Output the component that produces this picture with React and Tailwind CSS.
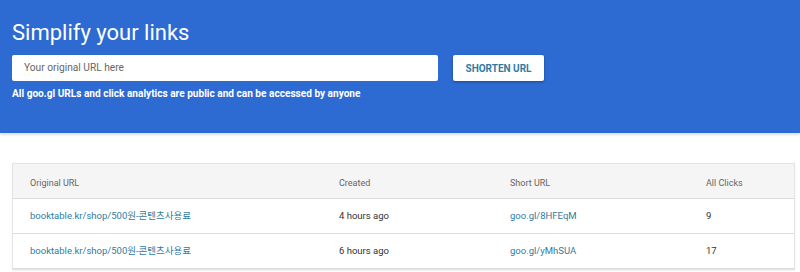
import React from 'react';

const rows = [
  { original: 'booktable.kr/shop/500원-콘텐츠사용료', created: '4 hours ago', short: 'goo.gl/8HFEqM', clicks: '9' },
  { original: 'booktable.kr/shop/500원-콘텐츠사용료', created: '6 hours ago', short: 'goo.gl/yMhSUA', clicks: '17' },
];

const font = { fontFamily: 'Roboto, "Noto Sans CJK KR", Arial, sans-serif' };

const App = () => {
  return (
    <div className="w-[800px] h-[272px] overflow-hidden bg-white" style={font}>
      {/* header */}
      <div className="h-[133px] bg-[#2d6bd3] px-3 pt-[18px] shadow-[0_2px_2px_rgba(0,0,0,0.12)]">
        <h1 className="text-[22px] leading-[30px] text-white">Simplify your links</h1>
        <div className="mt-[7px] flex items-center">
          <div className="w-[426px] h-[26px] bg-white rounded-[2px] flex items-center px-3 text-[10.2px] text-[#666]">
            Your original URL here
          </div>
          <button className="ml-[15px] w-[91px] h-[26px] bg-white rounded-[2px] text-[10px] font-bold text-[#2f7ba3] shadow-[0_1px_3px_rgba(0,0,0,0.35)]">
            SHORTEN URL
          </button>
        </div>
        <p className="mt-[5px] text-[10.1px] font-bold text-white">
          All goo.gl URLs and click analytics are public and can be accessed by anyone
        </p>
      </div>

      {/* table card */}
      <div className="ml-3 mr-[5px] mt-[30px] border border-[#e4e4e4] shadow-[0_1px_2px_rgba(0,0,0,0.06)]">
        <div className="h-[35px] bg-[#f5f5f5] border-b border-[#dcdcdc] grid grid-cols-[309px_171px_196px_1fr] items-center pl-[17px] pt-[6px] text-[9px] text-[#666]">
          <div>Original URL</div>
          <div>Created</div>
          <div>Short URL</div>
          <div>All Clicks</div>
        </div>
        {rows.map((r, i) => (
          <div
            key={i}
            className="h-[35px] border-b border-[#dcdcdc] grid grid-cols-[309px_171px_196px_1fr] items-center pl-[17px] text-[9.5px] text-[#333]"
          >
            <div className="text-[#2f7ba3]">{r.original}</div>
            <div>{r.created}</div>
            <div className="text-[#2f7ba3]">{r.short}</div>
            <div>{r.clicks}</div>
          </div>
        ))}
      </div>
    </div>
  );
};

export default App;
